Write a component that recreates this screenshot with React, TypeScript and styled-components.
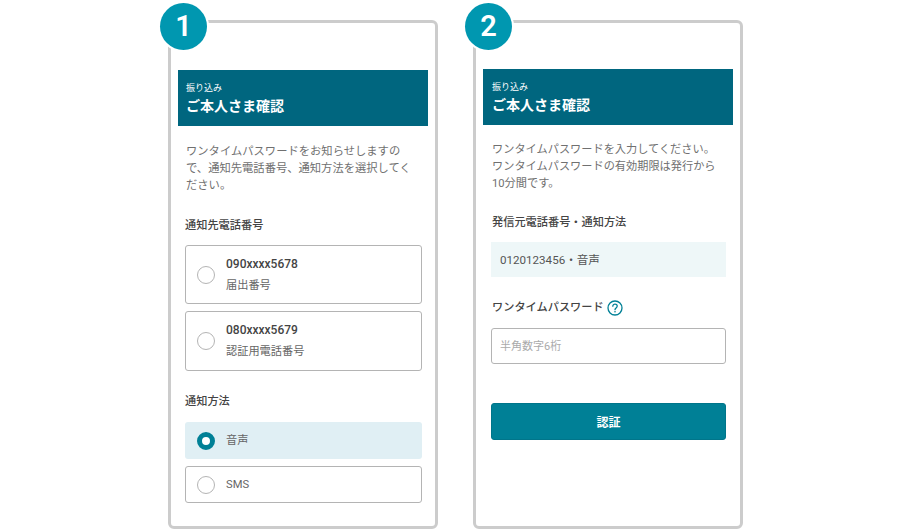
import React from 'react';
import styled, { createGlobalStyle } from 'styled-components';

const GlobalStyle = createGlobalStyle`
  html, body {
    margin: 0;
    background: #fff;
    font-family: Roboto, "Noto Sans CJK JP", sans-serif;
  }
`;

const Page = styled.div`
  display: flex;
  gap: 35px;
  width: 900px;
  height: 529px;
  box-sizing: border-box;
  padding: 20px 0 0 168px;
  overflow: hidden;
`;

const Card = styled.section<{ $top: number }>`
  position: relative;
  box-sizing: border-box;
  width: 270px;
  height: 509px;
  padding-top: ${(props) => props.$top}px;
  border: 3px solid #cccccc;
  border-radius: 6px;
`;

const Badge = styled.div`
  position: absolute;
  left: -11px;
  top: -20px;
  width: 47px;
  height: 47px;
  display: flex;
  align-items: center;
  justify-content: center;
  border-radius: 50%;
  background: #0097b0;
  box-shadow: 0 0 0 2px #fff;
  color: #fff;
  font-size: 29px;
  font-weight: 600;
  line-height: 49px;
`;

const Header = styled.header<{ $inset: number }>`
  margin: 0 7px;
  height: 56px;
  box-sizing: border-box;
  padding: 12px ${(props) => props.$inset}px 0;
  background: #00667f;
  color: #fff;
`;

const HeaderSub = styled.div`
  font-size: 9px;
  line-height: 13px;
`;

const HeaderTitle = styled.div`
  margin-top: 1px;
  font-size: 14px;
  line-height: 20px;
  font-weight: 700;
`;

const Body = styled.div<{ $top: number; $left: number; $right: number }>`
  padding: ${(props) => props.$top}px ${(props) => props.$right}px 0 ${(props) => props.$left}px;
`;

const Lead = styled.p<{ $size: number }>`
  margin: 0 0 0 1px;
  font-size: ${(props) => props.$size}px;
  line-height: 17px;
  color: #707070;
`;

const Label = styled.div<{ $top: number; $indent?: number }>`
  display: flex;
  align-items: center;
  gap: 3px;
  margin-top: ${(props) => props.$top}px;
  margin-left: ${(props) => props.$indent ?? 0}px;
  font-size: 11.2px;
  line-height: 16px;
  font-weight: 500;
  color: #444;
`;

const Group = styled.div<{ $top: number }>`
  display: flex;
  flex-direction: column;
  gap: 7px;
  margin-top: ${(props) => props.$top}px;
`;

const Option = styled.div<{ $height: number; $selected?: boolean }>`
  display: flex;
  align-items: center;
  gap: 11px;
  box-sizing: border-box;
  height: ${(props) => props.$height}px;
  padding-left: ${(props) => (props.$selected ? 12 : 11)}px;
  border: ${(props) => (props.$selected ? 'none' : '1px solid #b4b4b4')};
  border-radius: 3px;
  background: ${(props) => (props.$selected ? '#e0eff4' : '#fff')};
`;

const Radio = styled.span<{ $checked?: boolean }>`
  flex: none;
  box-sizing: border-box;
  width: 18px;
  height: 18px;
  border-radius: 50%;
  border: ${(props) => (props.$checked ? '5.5px solid #008096' : '1px solid #b4b4b4')};
  background: #fff;
`;

const OptionText = styled.div`
  display: flex;
  flex-direction: column;
  gap: 6px;
`;

const PhoneNumber = styled.div`
  font-size: 12px;
  line-height: 16px;
  font-weight: 500;
  color: #444;
`;

const Note = styled.div`
  font-size: 11.2px;
  line-height: 16px;
  color: #666;
`;

const Info = styled.div`
  margin-top: 11px;
  height: 35px;
  box-sizing: border-box;
  display: flex;
  align-items: center;
  padding: 0 0 1px 9px;
  background: #eef7f8;
  font-size: 11.6px;
  color: #555;
`;

const PasswordInput = styled.input`
  display: block;
  box-sizing: border-box;
  width: 100%;
  height: 36px;
  margin-top: 12px;
  padding: 0 8px;
  border: 1px solid #b4b4b4;
  border-radius: 3px;
  outline: none;
  font-family: inherit;
  font-size: 11px;
  &::placeholder {
    color: #aaaaaa;
  }
`;

const Submit = styled.button`
  display: block;
  width: 100%;
  height: 37px;
  margin-top: 39px;
  padding: 0;
  border: 1px solid #00758a;
  border-radius: 3px;
  background: #008096;
  color: #fff;
  font-family: inherit;
  font-size: 12px;
  font-weight: 700;
`;

const HelpIcon = () => (
  <svg width="16" height="16" viewBox="0 0 16 16" fill="none">
    <circle cx="8" cy="8" r="7" stroke="#008096" strokeWidth="1.3" />
    <path
      d="M5.8 6.2c0-1.3 1-2.1 2.2-2.1s2.2.8 2.2 2c0 1.9-2.2 1.8-2.2 3.6"
      stroke="#008096"
      strokeWidth="1.3"
      strokeLinecap="round"
    />
    <circle cx="8" cy="11.8" r=".8" fill="#008096" />
  </svg>
);

const phones = [
  { number: '090xxxx5678', note: '届出番号', height: 59 },
  { number: '080xxxx5679', note: '認証用電話番号', height: 60 },
];

const App = () => (
  <Page>
    <GlobalStyle />
    <Card $top={47}>
      <Badge>1</Badge>
      <Header $inset={8}>
        <HeaderSub>振り込み</HeaderSub>
        <HeaderTitle>ご本人さま確認</HeaderTitle>
      </Header>
      <Body $top={17} $left={14} $right={13}>
        <Lead $size={11.3}>
          ワンタイムパスワードをお知らせしますの
          <br />
          で、通知先電話番号、通知方法を選択してく
          <br />
          ださい。
        </Lead>
        <Label $top={24}>通知先電話番号</Label>
        <Group $top={11}>
          {phones.map((phone) => (
            <Option $height={phone.height} key={phone.number}>
              <Radio />
              <OptionText>
                <PhoneNumber>{phone.number}</PhoneNumber>
                <Note>{phone.note}</Note>
              </OptionText>
            </Option>
          ))}
        </Group>
        <Label $top={23}>通知方法</Label>
        <Group $top={12}>
          <Option $height={37} $selected>
            <Radio $checked />
            <Note>音声</Note>
          </Option>
          <Option $height={37}>
            <Radio />
            <Note>SMS</Note>
          </Option>
        </Group>
      </Body>
    </Card>
    <Card $top={46}>
      <Badge>2</Badge>
      <Header $inset={9}>
        <HeaderSub>振り込み</HeaderSub>
        <HeaderTitle>ご本人さま確認</HeaderTitle>
      </Header>
      <Body $top={16} $left={15} $right={14}>
        <Lead $size={11.2}>
          ワンタイムパスワードを入力してください。
          <br />
          ワンタイムパスワードの有効期限は発行から
          <br />
          10分間です。
        </Lead>
        <Label $top={23} $indent={1}>発信元電話番号・通知方法</Label>
        <Info>0120123456・音声</Info>
        <Label $top={23} $indent={1}>
          ワンタイムパスワード
          <HelpIcon />
        </Label>
        <PasswordInput placeholder="半角数字6桁" />
        <Submit>認証</Submit>
      </Body>
    </Card>
  </Page>
);

export default App;
